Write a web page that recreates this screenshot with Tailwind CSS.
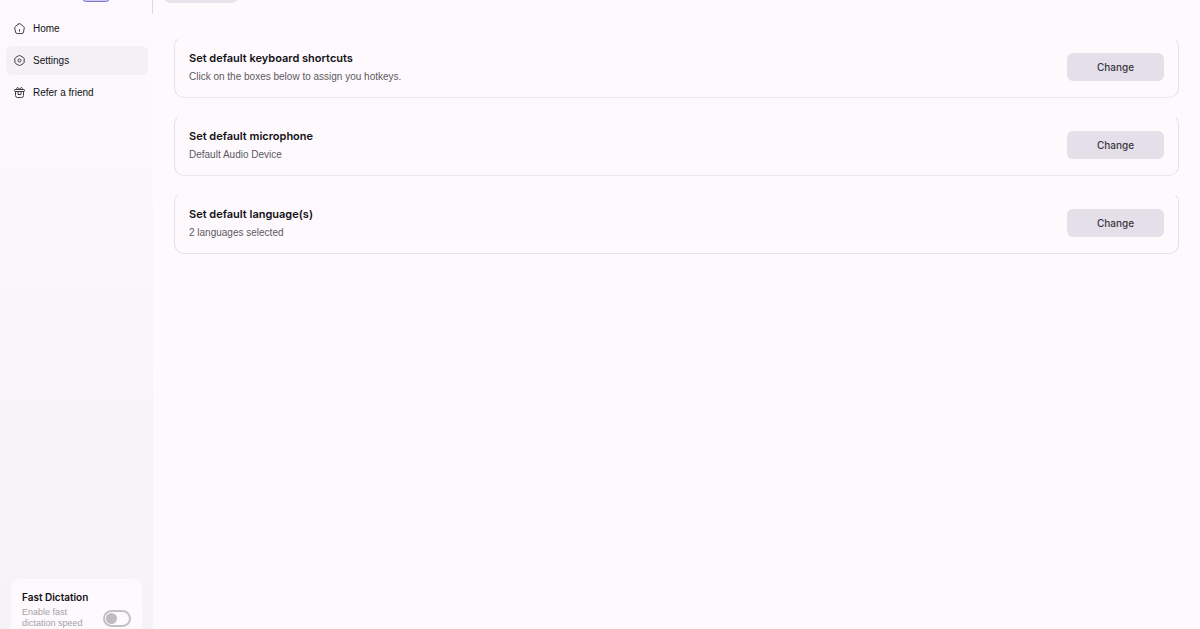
<!DOCTYPE html>
<html lang="en">
<head>
  <meta charset="UTF-8">
  <meta name="viewport" content="width=device-width, initial-scale=1">
  <title>Settings</title>
  <script src="https://cdn.jsdelivr.net/npm/@tailwindcss/browser@4"></script>
</head>
<body class="flex h-screen overflow-hidden bg-[#fef9fd] font-['Liberation_Sans',sans-serif] text-[#121115]">

  <!-- Sidebar -->
  <aside class="flex w-[153px] shrink-0 flex-col bg-linear-to-b from-[#fdf9fd] to-[#f5f2f8]">
    <div class="flex h-3.5 items-start border-r border-[#dcd8df] pl-[82px]">
      <span class="-mt-3.5 h-4 w-7 rounded-sm border border-[#8279d6] bg-[#cfc9f2]"></span>
    </div>

    <nav class="flex flex-col gap-[3px] pr-[5px] pl-1.5 text-[10px]">
      <a href="#" class="flex h-[29px] items-center gap-2 rounded-md px-2">
        <svg class="size-[11px]" viewBox="0 0 22 22" fill="none" stroke="#3f3c45" stroke-width="2" stroke-linecap="round" stroke-linejoin="round">
          <path d="M9.3 1.9 2.6 7.1Q1.2 8.2 1.5 10l1.5 8q.5 3 3.5 3h9q3 0 3.5-3l1.5-8q.3-1.8-1.1-2.9l-6.7-5.2Q11 .7 9.3 1.9Z"/>
          <path d="M11 16.5v-3"/>
        </svg>
        Home
      </a>
      <a href="#" aria-current="page" class="flex h-[29px] items-center gap-2 rounded-md bg-[#f4f0f6] px-2">
        <svg class="size-[11px]" viewBox="0 0 22 22" fill="none" stroke="#3f3c45" stroke-width="2" stroke-linejoin="round">
          <path d="M9.3 1.5 3.2 5Q1.700 6 1.700 7.700v6.600q0 1.700 1.500 2.700l6.100 3.500q1.700.9 3.400 0l6.100-3.500q1.500-1 1.500-2.700V7.700q0-1.700-1.500-2.700l-6.100-3.500q-1.700-.9-3.400 0Z"/>
          <circle cx="11" cy="11" r="3"/>
        </svg>
        Settings
      </a>
      <a href="#" class="flex h-[29px] items-center gap-2 rounded-md px-2">
        <svg class="size-[11px]" viewBox="0 0 22 22" fill="none" stroke="#3f3c45" stroke-width="2" stroke-linecap="round" stroke-linejoin="round">
          <path d="M3 9v8q0 4 4 4h8q4 0 4-4V9"/>
          <rect x="1" y="5" width="20" height="4" rx="1.500"/>
          <path d="M11 5H5.500Q4.500 3 6 1.500t3 .5l2 3Zm0 0h5.500q1-2-.5-3.500t-3 .5l-2 3Z"/>
          <path d="M8 9v6h6V9"/>
        </svg>
        Refer a friend
      </a>
    </nav>

    <!-- Fast dictation -->
    <div class="mt-auto mr-[11px] ml-[11px] rounded-t-lg bg-[#fef9fd] px-[11px] pt-3">
      <h2 class="font-['Inter',sans-serif] text-[10px]/3 font-semibold">Fast Dictation</h2>
      <label class="relative flex items-center justify-between pt-1 text-[9px]/[11px] text-[#a5a1a8]">
        <span class="w-16">Enable fast dictation speed</span>
        <input type="checkbox" role="switch" class="peer sr-only">
        <span class="flex h-[17px] w-7 items-center rounded-full border-2 border-[#c4c1c5] px-px peer-checked:justify-end">
          <span class="size-[11px] rounded-full bg-[#bfbcc0]"></span>
        </span>
      </label>
    </div>
  </aside>

  <!-- Settings list -->
  <main class="min-w-0 flex-1">
    <div class="flex h-9 items-start pl-[11px]">
      <div class="-mt-4 h-[19px] w-[74px] rounded-md bg-[#e9e4ec]"></div>
    </div>

    <div class="flex flex-col gap-4 pr-[21px] pl-[21px]">
      <section class="flex items-center justify-between rounded-[10px] border border-[#e4e0e6] border-t-[#fcf7fb] border-b-[#ece7ed] px-3.5 py-[13px]">
        <div>
          <h2 class="font-['Inter',sans-serif] text-[11px]/4 font-semibold">Set default keyboard shortcuts</h2>
          <p class="pt-1 text-[10px]/[14px] text-[#5c5961]">Click on the boxes below to assign you hotkeys.</p>
        </div>
        <button type="button" class="h-7 w-[97px] rounded-md bg-[#e5dfe9] font-['Inter',sans-serif] text-[10px] font-medium text-[#3a3742]">Change</button>
      </section>

      <section class="flex items-center justify-between rounded-[10px] border border-[#e4e0e6] border-t-[#fcf7fb] border-b-[#ece7ed] px-3.5 py-[13px]">
        <div>
          <h2 class="font-['Inter',sans-serif] text-[11px]/4 font-semibold">Set default microphone</h2>
          <p class="pt-1 text-[10px]/[14px] text-[#5c5961]">Default Audio Device</p>
        </div>
        <button type="button" class="h-7 w-[97px] rounded-md bg-[#e5dfe9] font-['Inter',sans-serif] text-[10px] font-medium text-[#3a3742]">Change</button>
      </section>

      <section class="flex items-center justify-between rounded-[10px] border border-[#e4e0e6] border-t-[#fcf7fb] px-3.5 py-[13px]">
        <div>
          <h2 class="font-['Inter',sans-serif] text-[11px]/4 font-semibold">Set default language(s)</h2>
          <p class="pt-1 text-[10px]/[14px] text-[#5c5961]">2 languages selected</p>
        </div>
        <button type="button" class="h-7 w-[97px] rounded-md bg-[#e5dfe9] font-['Inter',sans-serif] text-[10px] font-medium text-[#3a3742]">Change</button>
      </section>
    </div>
  </main>

</body>
</html>
